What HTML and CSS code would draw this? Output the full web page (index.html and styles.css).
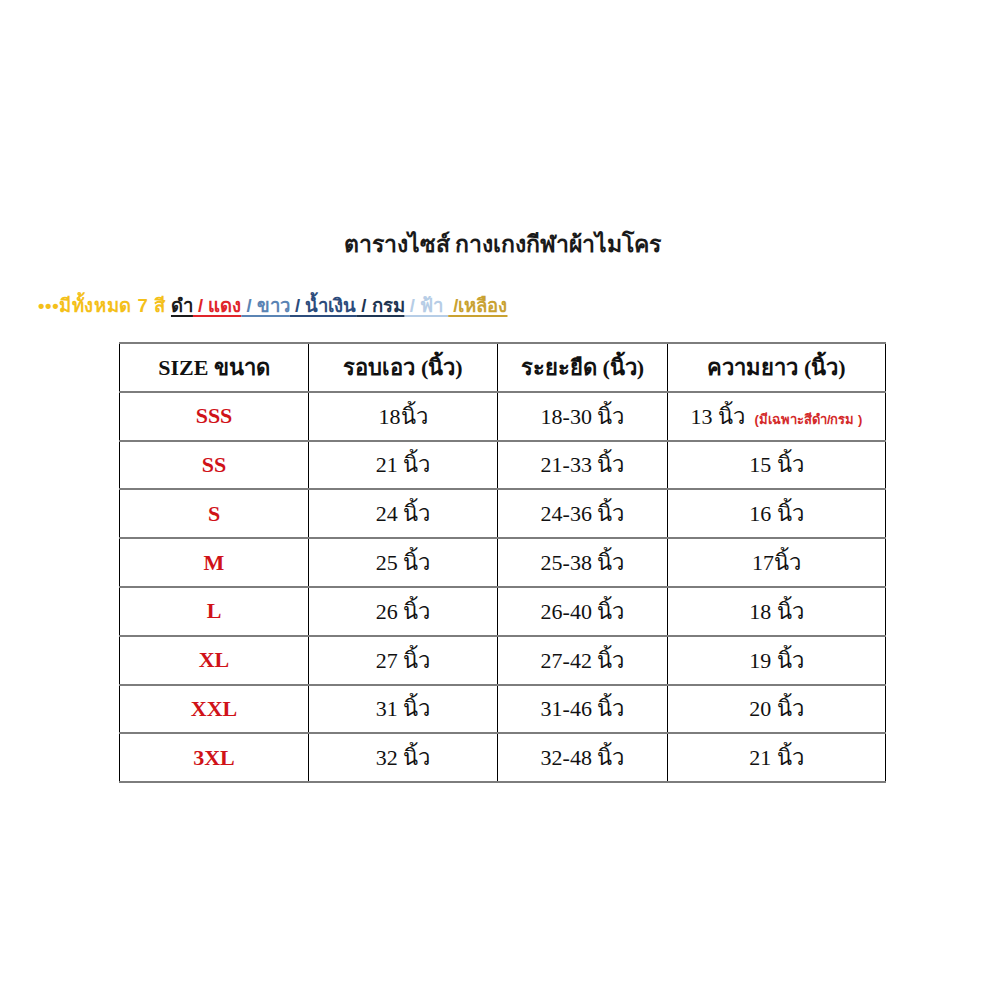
FILE: index.html
```html
<!DOCTYPE html>
<html lang="th">
<head>
<meta charset="utf-8">
<title>ตารางไซส์</title>
<link rel="stylesheet" href="styles.css">
</head>
<body>
<div class="page">
  <h1 class="title">ตารางไซส์ กางเกงกีฬาผ้าไมโคร</h1>
  <p class="colors"><span class="total">•••มีทั้งหมด 7 สี</span> <span class="c-black">ดำ</span><span class="c-red">&nbsp;/ แดง</span><span class="c-white">&nbsp;/ ขาว</span><span class="c-blue">&nbsp;/ น้ำเงิน</span><span class="c-navy">&nbsp;/ กรม</span><span class="c-sky">&nbsp;/ ฟ้า&nbsp;</span><span class="c-yellow">&nbsp;/เหลือง</span></p>
  <table class="sizes">
    <colgroup><col class="w1"><col class="w2"><col class="w3"><col class="w4"></colgroup>
    <thead>
      <tr><th>SIZE ขนาด</th><th>รอบเอว (นิ้ว)</th><th>ระยะยืด (นิ้ว)</th><th>ความยาว (นิ้ว)</th></tr>
    </thead>
    <tbody>
      <tr><td class="size">SSS</td><td>18นิ้ว</td><td>18-30 นิ้ว</td><td>13 นิ้ว <span class="note">(มีเฉพาะสีดำ/กรม )</span></td></tr>
      <tr><td class="size">SS</td><td>21 นิ้ว</td><td>21-33 นิ้ว</td><td>15 นิ้ว</td></tr>
      <tr><td class="size">S</td><td>24 นิ้ว</td><td>24-36 นิ้ว</td><td>16 นิ้ว</td></tr>
      <tr><td class="size">M</td><td>25 นิ้ว</td><td>25-38 นิ้ว</td><td>17นิ้ว</td></tr>
      <tr><td class="size">L</td><td>26 นิ้ว</td><td>26-40 นิ้ว</td><td>18 นิ้ว</td></tr>
      <tr><td class="size">XL</td><td>27 นิ้ว</td><td>27-42 นิ้ว</td><td>19 นิ้ว</td></tr>
      <tr><td class="size">XXL</td><td>31 นิ้ว</td><td>31-46 นิ้ว</td><td>20 นิ้ว</td></tr>
      <tr><td class="size">3XL</td><td>32 นิ้ว</td><td>32-48 นิ้ว</td><td>21 นิ้ว</td></tr>
    </tbody>
  </table>
</div>
</body>
</html>
```

FILE: styles.css
```css
html, body {
  margin: 0;
  padding: 0;
  background: #ffffff;
}
body {
  font-family: "Liberation Serif", "DejaVu Serif", serif;
  color: #111111;
}
.page {
  width: 1005px;
  padding-top: 226px;
}
.title {
  margin: 0;
  text-align: center;
  font-size: 23px;
  font-weight: bold;
  line-height: 38px;
  color: #1a1a1a;
}
.colors {
  margin: 29px 0 0 38px;
  font-family: "Liberation Sans", "DejaVu Sans", sans-serif;
  font-size: 18.5px;
  font-weight: bold;
  line-height: 26px;
}
.colors .total { color: #f4c01a; letter-spacing: 0.6px; }
.colors span:not(.total) { text-decoration: underline; text-decoration-thickness: 2px; text-underline-offset: 3px; }
.c-black { color: #1a1a1a; }
.c-red { color: #e0242a; }
.c-white { color: #5a84b4; }
.c-blue { color: #2c4c7c; }
.c-navy { color: #1e3552; }
.c-sky { color: #b6cde6; }
.c-yellow { color: #c9a232; }
.sizes {
  margin: 23px 0 0 119px;
  border-collapse: collapse;
  table-layout: fixed;
  width: 766px;
}
.w1 { width: 189px; }
.w2 { width: 189px; }
.w3 { width: 170px; }
.w4 { width: 218px; }
.sizes th, .sizes td {
  border-top: 2px solid #7d7d7d;
  border-bottom: 2px solid #7d7d7d;
  border-left: 1.5px solid #000000;
  border-right: 1.5px solid #000000;
  height: 46.8px;
  padding: 0;
  text-align: center;
  vertical-align: middle;
  font-size: 22px;
  color: #111111;
}
.sizes th {
  font-weight: bold;
}
.sizes td.size {
  color: #d01218;
  font-weight: bold;
}
.note {
  font-family: "Liberation Sans", "DejaVu Sans", sans-serif;
  font-size: 13px;
  font-weight: bold;
  color: #d42a2a;
  margin-left: 4px;
}
```
